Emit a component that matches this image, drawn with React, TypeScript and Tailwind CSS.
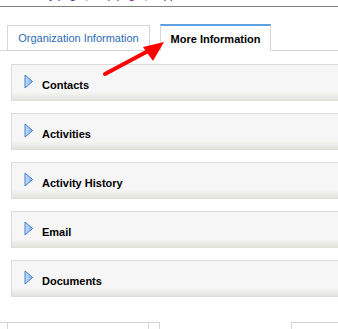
import React from "react";

const sections = ["Contacts", "Activities", "Activity History", "Email", "Documents"];

function Expander() {
    return (
        <svg width="10" height="15" viewBox="0 0 10 15" className="shrink-0">
            <defs>
                <linearGradient id="tri" x1="0" y1="0" x2="1" y2="0">
                    <stop offset="0" stopColor="#c9defa" />
                    <stop offset="1" stopColor="#7fb0ec" />
                </linearGradient>
            </defs>
            <polygon points="1,1 8.5,7.5 1,14" fill="url(#tri)" stroke="#3f7fd0" strokeWidth="1" strokeLinejoin="round" />
        </svg>
    );
}

function Section({ title }: { title: string }) {
    return (
        <div className="relative h-[37px] ml-[11px] border-t border-l border-[#dcdcdc] bg-[linear-gradient(to_bottom,#f6f6f6_0px,#f6f6f6_27px,#eeeeea_30px,#e3e3de_35px,#d6d6d0_37px)]">
            <div className="flex items-start pl-[12px] gap-[8px]">
                <div className="mt-[9px]">
                    <Expander />
                </div>
                <span className="text-[11px] leading-[13px] font-bold text-black mt-[14px]">{title}</span>
            </div>
        </div>
    );
}

export default function App() {
    return (
        <div className="relative w-[338px] h-[329px] overflow-hidden bg-white font-['Liberation_Sans',Arial,sans-serif]">
            {/* clipped header links */}
            <div className="h-[3px] overflow-hidden pl-[40px]">
                <div className="mt-[-11px] text-[11px] leading-[12px] whitespace-nowrap">
                    <span className="text-[#1a1a8a]">My page</span>
                    <span className="text-[#888]"> | </span>
                    <span className="text-[#800080]">Help page</span>
                    <span className="text-[#888]"> | </span>
                    <span className="text-[#1a1a8a]">Support</span>
                </div>
            </div>
            <div className="h-[4px] border-b border-[#7f7f7f]" />

            {/* tabs */}
            <div className="mt-[17px] flex items-end pl-[7px] border-b border-[#d6d6d6] h-[27px]">
                <div className="w-[143px] h-[26px] border-t border-l border-r border-[#d6d6d6] flex items-center justify-center text-[11px] text-[#2b6cb5] mb-[-1px] border-b border-b-[#d6d6d6]">
                    Organization Information
                </div>
                <div className="ml-[10px] w-[111px] h-[27px] border-t-2 border-t-[#5e9ee3] border-l border-r border-[#d6d6d6] bg-white mb-[-1px] flex items-center justify-center text-[11px] font-bold text-black pt-[1px]">
                    More Information
                </div>
            </div>

            {/* sections */}
            <div className="mt-[13px] flex flex-col gap-[12px]">
                {sections.map((s) => (
                    <Section key={s} title={s} />
                ))}
            </div>

            {/* next tab strip, cut off */}
            <div className="mt-[25px] flex">
                <div className="w-[160px] h-[10px] border-t border-[#d6d6d6] flex">
                    <div className="ml-[7px] w-[142px] border-l border-r border-[#d6d6d6]" />
                    <div className="w-[11px] border-r border-[#d6d6d6]" />
                </div>
                <div className="ml-[131px] flex-1 h-[10px] border-t border-l border-[#d6d6d6]" />
            </div>

            {/* red arrow */}
            <svg className="absolute left-0 top-0 pointer-events-none" width="338" height="329">
                <line x1="105" y1="74" x2="150" y2="50" stroke="#ff0000" strokeWidth="4" strokeLinecap="round" />
                <polygon points="164,42 143,47 153,61" fill="#ff0000" />
            </svg>
        </div>
    );
}
